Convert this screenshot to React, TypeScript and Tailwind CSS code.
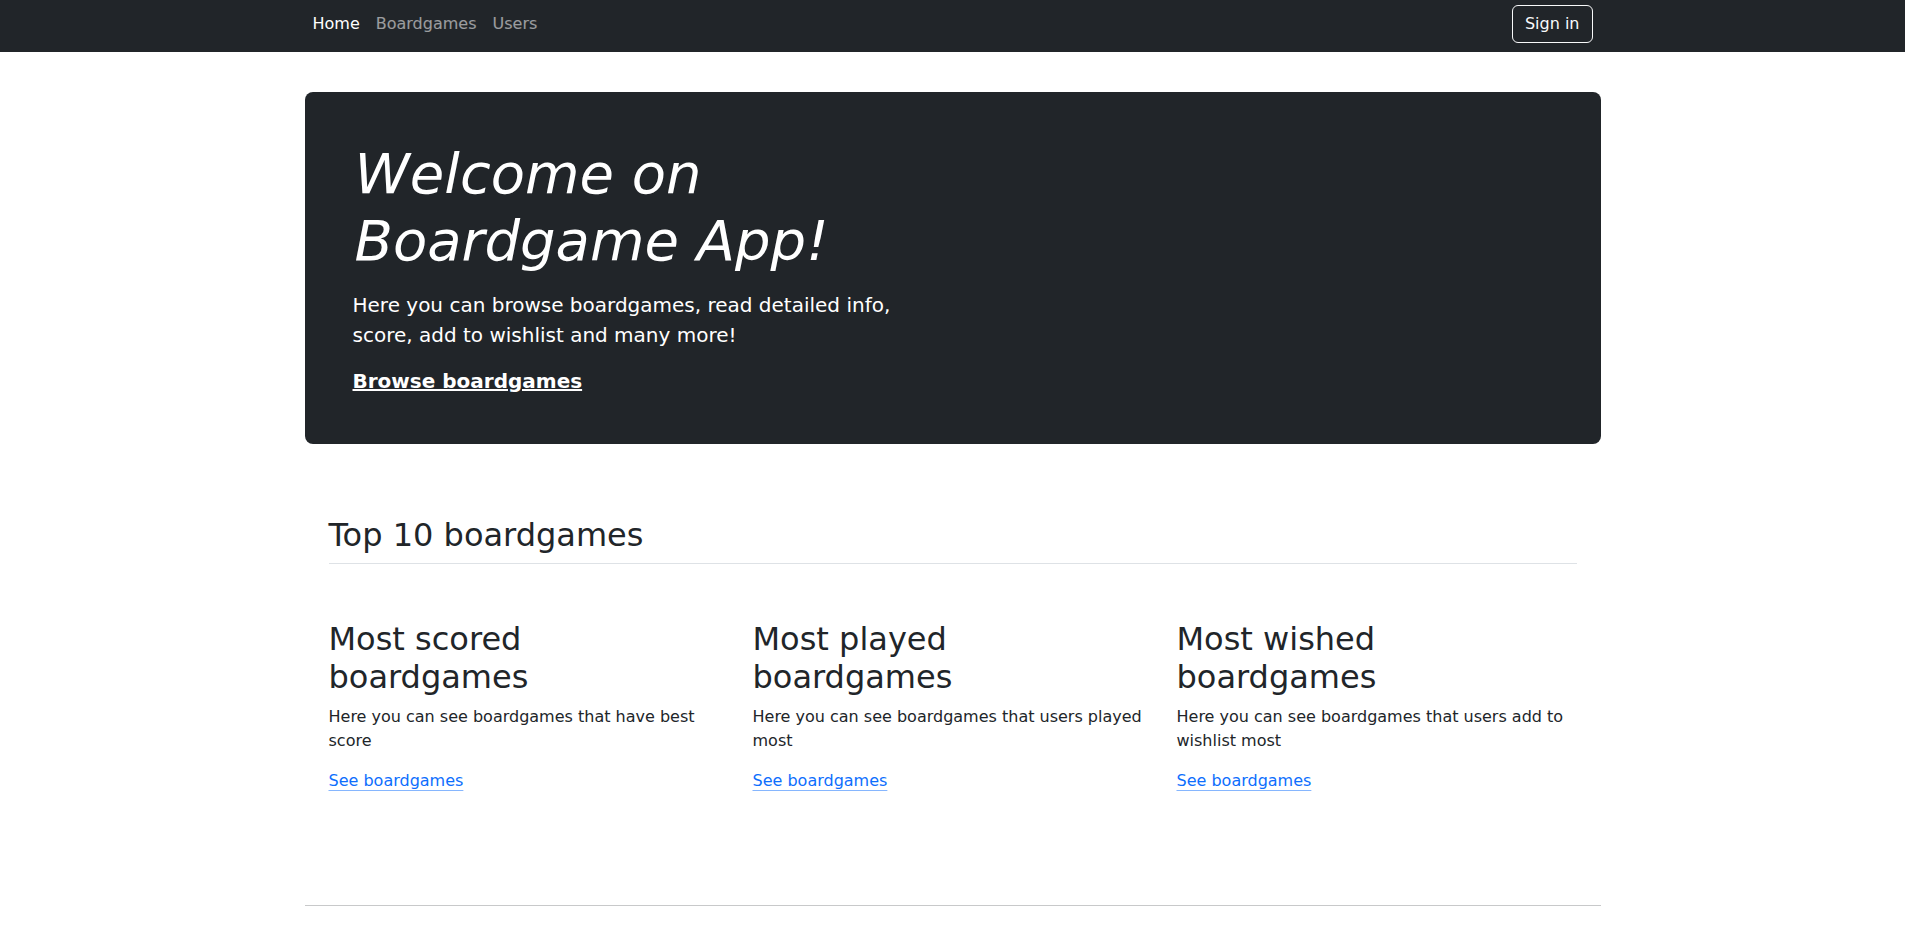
export default function App() {
  const tops = [
    {
      title: "Most scored boardgames",
      text: "Here you can see boardgames that have best score",
    },
    {
      title: "Most played boardgames",
      text: "Here you can see boardgames that users played most",
    },
    {
      title: "Most wished boardgames",
      text: "Here you can see boardgames that users add to wishlist most",
    },
  ];

  return (
    <div className="w-[1905px] min-h-screen bg-white text-[#212529] font-['DejaVu_Sans',sans-serif]">
      {/* Navbar */}
      <nav className="bg-[#212529] h-[52px] pb-1">
        <div className="mx-auto w-[1320px] px-3 h-full flex items-center justify-between">
          <ul className="flex">
            <li>
              <a href="#" className="block px-2 text-base leading-6 text-white">
                Home
              </a>
            </li>
            <li>
              <a href="#" className="block px-2 text-base leading-6 text-white/55">
                Boardgames
              </a>
            </li>
            <li>
              <a href="#" className="block px-2 text-base leading-6 text-white/55">
                Users
              </a>
            </li>
          </ul>
          <button className="mr-2 h-[38px] px-3 border border-[#f8f9fa] rounded-md text-base leading-6 text-[#f8f9fa]">
            Sign in
          </button>
        </div>
      </nav>

      <main className="mx-auto w-[1320px] px-3">
        {/* Hero */}
        <div className="mt-10 rounded-lg bg-[#212529] p-12 text-white">
          <div className="w-[600px]">
            <h1 className="text-[56px] leading-[1.2] font-light italic mb-4 pl-0.5">
              Welcome on Boardgame App!
            </h1>
            <p className="text-xl leading-[1.5] mb-4">
              Here you can browse boardgames, read detailed info, score, add to
              wishlist and many more!
            </p>
            <a href="#" className="text-xl leading-[1.5] font-bold underline text-white">
              Browse boardgames
            </a>
          </div>
        </div>

        {/* Top 10 */}
        <section className="px-6 pt-[72px]">
          <h2 className="text-[32px] leading-[1.2] pb-2 border-b border-[#dee2e6]">
            Top 10 boardgames
          </h2>
          <div className="grid grid-cols-3 gap-x-6 mt-14">
            {tops.map((t) => (
              <div key={t.title}>
                <h2 className="text-[32px] leading-[1.2] mb-2">{t.title}</h2>
                <p className="text-base leading-6 mb-4">{t.text}</p>
                <a
                  href="#"
                  className="text-base leading-6 text-[#0d6efd] underline underline-offset-4 decoration-[#0d6efd]/50"
                >
                  See boardgames
                </a>
              </div>
            ))}
          </div>
        </section>

        <footer className="mt-[112px] pb-24">
          <hr className="border-t border-[#c8c9ca]" />
        </footer>
      </main>
    </div>
  );
}
